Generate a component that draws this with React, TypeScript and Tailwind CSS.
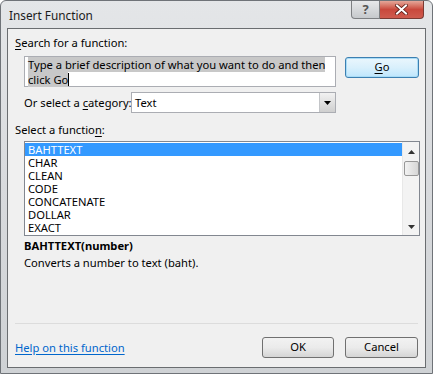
import React from "react";

const font = { fontFamily: '"Noto Sans", "Open Sans", sans-serif' };

function U({ children }: { children: React.ReactNode }) {
  return <span className="underline underline-offset-2">{children}</span>;
}

export default function App() {
  const items = ["BAHTTEXT", "CHAR", "CLEAN", "CODE", "CONCATENATE", "DOLLAR", "EXACT"];
  return (
    <div
      className="w-[433px] h-[374px] flex flex-col rounded-t-[6px] border border-[#6f7378] bg-gradient-to-b from-[#e4e6e8] via-[#d8dadd] to-[#cfd2d5] text-[11.2px] text-black overflow-hidden"
      style={font}
    >
      {/* title bar */}
      <div className="h-[27px] flex items-start shrink-0">
        <div className="ml-[8px] mt-[6px] leading-[16px] text-[11.8px] text-[#1a1a1a]">Insert Function</div>
        <div className="ml-auto mr-[8px] flex">
          <div className="w-[29px] h-[18px] rounded-bl-[4px] border border-t-0 border-[#7d7f82] bg-gradient-to-b from-[#e7e8ea] to-[#c6c9cc] flex items-center justify-center text-[13px] leading-none text-[#555] font-bold">
            ?
          </div>
          <div className="w-[44px] h-[18px] rounded-br-[4px] border border-t-0 border-l-0 border-[#7b3a33] bg-gradient-to-b from-[#e4a699] via-[#c9483c] to-[#cf5b4e] flex items-center justify-center">
            <svg width="13" height="11" viewBox="0 0 13 11">
              <path d="M2 1.5 L11 9.5 M11 1.5 L2 9.5" stroke="#5a1b14" strokeWidth="3.6" strokeLinecap="square" />
              <path d="M2 1.5 L11 9.5 M11 1.5 L2 9.5" stroke="#ffffff" strokeWidth="2" strokeLinecap="square" />
            </svg>
          </div>
        </div>
      </div>

      {/* client area */}
      <div className="mx-[6px] h-[340px] border border-[#6a6d70] bg-[#f0f0f0] flex flex-col shrink-0">
        <div className="ml-[7px] mt-[6px] h-[16px] leading-[16px]">
          <U>S</U>earch for a function:
        </div>

        <div className="ml-[16px] mt-[5px] flex items-start">
          <div className="w-[312px] h-[31px] border border-[#abadb3] bg-white pl-[3px] pt-[1px] leading-[14.5px] whitespace-nowrap">
            <span className="bg-[#c8c8c8]">Type a brief description of what you want to do and then</span>
            <br />
            <span className="bg-[#c8c8c8]">click Go</span>
            <span className="inline-block w-px h-[13px] bg-black align-[-2px]" />
          </div>
          <div className="ml-[9px] mt-[1px] w-[74px] h-[21px] rounded-[3px] border border-[#3c7fb1] bg-gradient-to-b from-[#eaf6fd] via-[#d9f0fc] to-[#bee6fd] flex items-center justify-center shadow-[inset_0_0_0_1px_#a9dcf6]">
            <U>G</U>o
          </div>
        </div>

        <div className="ml-[16px] mt-[5px] flex items-center">
          <div className="w-[107px] leading-[16px] whitespace-nowrap">
            Or select a <U>c</U>ategory:
          </div>
          <div className="w-[205px] h-[21px] border border-[#abadb3] bg-white flex items-center">
            <div className="pl-[3px] flex-1 leading-[16px]">Text</div>
            <div className="w-[16px] h-[19px] border-l border-[#c3c5c8] bg-gradient-to-b from-[#f2f2f2] to-[#cfcfcf] flex items-center justify-center">
              <svg width="7" height="4" viewBox="0 0 7 4">
                <path d="M0 0 L7 0 L3.5 4 Z" fill="#000" />
              </svg>
            </div>
          </div>
        </div>

        <div className="ml-[7px] mt-[9px] h-[16px] leading-[16px]">
          Select a functio<U>n</U>:
        </div>

        <div className="ml-[16px] mt-[3px] w-[396px] h-[95px] border border-[#828790] bg-white flex">
          <div className="flex-1 pt-[1px]">
            {items.map((it, i) => (
              <div
                key={it}
                className={
                  "h-[13px] leading-[13px] pl-[3px] " + (i === 0 ? "bg-[#3399ff] text-white" : "")
                }
              >
                {it}
              </div>
            ))}
          </div>
          <div className="w-[17px] h-full bg-[#f3f3f3] border-l border-[#e8e8e8] flex flex-col items-center">
            <div className="h-[19px] flex items-center justify-center">
              <svg width="7" height="4" viewBox="0 0 7 4">
                <path d="M0 4 L7 4 L3.5 0 Z" fill="#333" />
              </svg>
            </div>
            <div className="w-[15px] h-[15px] rounded-[2px] border border-[#979797] bg-gradient-to-r from-[#f2f2f2] to-[#d6d6d6]" />
            <div className="flex-1" />
            <div className="h-[17px] flex items-center justify-center">
              <svg width="7" height="4" viewBox="0 0 7 4">
                <path d="M0 0 L7 0 L3.5 4 Z" fill="#333" />
              </svg>
            </div>
          </div>
        </div>

        <div className="ml-[16px] mt-[2px] h-[16px] leading-[16px] font-bold">BAHTTEXT(number)</div>
        <div className="ml-[16px] mt-[1px] h-[16px] leading-[16px]">Converts a number to text (baht).</div>

        <div className="ml-[7px] mt-[52px] w-[403px] h-px bg-[#dcdcdc]" />

        <div className="mt-[13px] flex items-center">
          <div className="ml-[7px] leading-[16px] text-[#0066cc] underline underline-offset-2">
            Help on this function
          </div>
          <div className="ml-auto w-[72px] h-[21px] rounded-[3px] border border-[#707070] bg-gradient-to-b from-[#f2f2f2] via-[#ebebeb] to-[#d5d5d5] flex items-center justify-center">
            OK
          </div>
          <div className="ml-[11px] mr-[7px] w-[73px] h-[21px] rounded-[3px] border border-[#707070] bg-gradient-to-b from-[#f2f2f2] via-[#ebebeb] to-[#d5d5d5] flex items-center justify-center">
            Cancel
          </div>
        </div>
      </div>
    </div>
  );
}
